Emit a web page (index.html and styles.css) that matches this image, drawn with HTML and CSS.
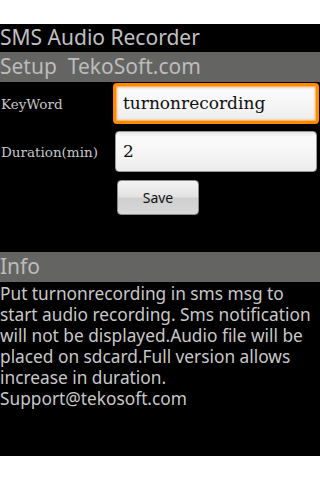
FILE: index.html
```html
<!DOCTYPE html>
<html>
<head>
<meta charset="utf-8">
<link rel="stylesheet" href="styles.css">
</head>
<body>
<div class="app">
  <div class="title">SMS Audio Recorder</div>
  <div class="bar">Setup&nbsp; TekoSoft.com</div>
  <div class="form">
    <div class="label">KeyWord</div>
    <div class="field field-focus">turnonrecording</div>
    <div class="label">Duration(min)</div>
    <div class="field">2</div>
    <div></div>
    <div class="actions"><button class="btn">Save</button></div>
  </div>
  <div class="bar info-bar">Info</div>
  <p class="info">Put turnonrecording in sms msg to start audio recording. Sms notification will not be displayed.Audio file will be placed on sdcard.Full version allows increase in duration. Support@tekosoft.com</p>
</div>
</body>
</html>
```
FILE: styles.css
```css
html, body {
  margin: 0;
  padding: 0;
  background: #ffffff;
}
.app {
  margin-top: 24px;
  height: 432px;
  background: #000000;
  color: #c4c4c4;
  font-family: "Noto Sans", "Open Sans", sans-serif;
  overflow: hidden;
}
.title {
  height: 28px;
  font-size: 21px;
  line-height: 27px;
  color: #c0c0c0;
  white-space: nowrap;
}
.bar {
  height: 30px;
  background: #646462;
  font-size: 21px;
  line-height: 29px;
  color: #bcbcbc;
  white-space: nowrap;
}
.form {
  display: grid;
  grid-template-columns: 113px 1fr;
  row-gap: 7px;
  padding-top: 1px;
  align-items: center;
}
.label {
  font-family: "DejaVu Serif", serif;
  font-size: 13.5px;
  color: #c8c8c8;
  padding-left: 1px;
  white-space: nowrap;
}
.field {
  height: 41px;
  box-sizing: border-box;
  margin: 0 3px 0 2px;
  border: 1px solid #9a9a9a;
  border-radius: 4px;
  background: linear-gradient(#e6e6e6, #fbfbfb 12%, #f4f4f4 60%, #ececec);
  font-family: "DejaVu Serif", serif;
  font-size: 17px;
  line-height: 38px;
  color: #101010;
  padding-left: 7px;
}
.field-focus {
  margin: 0 1px 0 0;
  border: 3px solid #ff8a00;
  box-shadow: 0 0 2px 1px #ffa43a inset;
  padding-left: 7px;
  line-height: 35px;
}
.actions {
  padding-top: 1px;
}
.btn {
  display: block;
  margin-left: 4px;
  width: 82px;
  height: 35px;
  border: 1px solid #8a8a8a;
  border-radius: 4px;
  background: linear-gradient(#f4f4f4, #e2e2e2 48%, #cfcfcf 52%, #d8d8d8);
  font-family: "Noto Sans", "Open Sans", sans-serif;
  font-size: 14px;
  color: #111111;
  padding: 0;
}
.info-bar {
  margin-top: 37px;
}
.info {
  margin: 0;
  font-size: 17.3px;
  line-height: 21px;
  color: #c8c8c8;
  padding-top: 1px;
}
```
